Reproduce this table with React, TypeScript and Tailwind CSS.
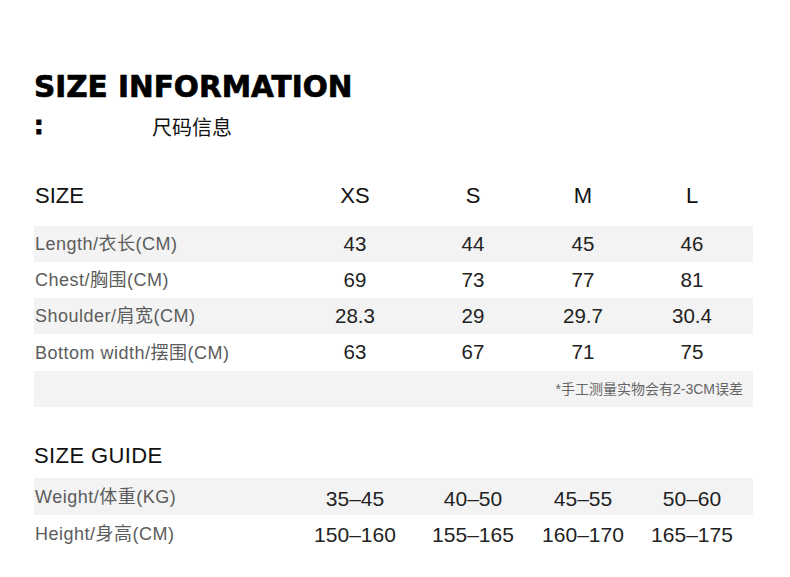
import React from "react";

const FONT = { fontFamily: '"Liberation Sans", "Noto Sans CJK SC", sans-serif' };

const widths = ["w-[118px]", "w-[118px]", "w-[102px]", "w-[116px]"];

function Row({
  label,
  values,
  shaded,
  h,
  valueClass,
}: {
  label: string;
  values: string[];
  shaded?: boolean;
  h: string;
  valueClass: string;
}) {
  return (
    <div className={`flex w-[719px] items-center ${h} ${shaded ? "bg-[#f3f3f3]" : ""}`}>
      <div className="w-[262px] pl-[1px] text-[18px] tracking-[0.5px] text-[#5c5c5c] leading-none">{label}</div>
      {values.map((v, i) => (
        <div key={i} className={`${widths[i]} text-center leading-none ${valueClass}`}>
          {v}
        </div>
      ))}
    </div>
  );
}

export default function App() {
  return (
    <div className="w-[790px] h-[577px] bg-white overflow-hidden" style={FONT}>
      <div className="pl-[34px] pt-[68px]">
        <div className="h-[40px] flex items-center">
          <div
            className="text-[29.5px] font-bold text-black leading-none [-webkit-text-stroke:0.7px_black]"
            style={{ fontFamily: '"DejaVu Sans", sans-serif' }}
          >
            SIZE INFORMATION
          </div>
        </div>
        <div className="h-[40px] flex items-center">
          <div
            className="w-[118px] text-[24px] font-bold leading-none text-black pb-[5px] [-webkit-text-stroke:0.8px_black]"
            style={{ fontFamily: '"DejaVu Sans", sans-serif' }}
          >
            :
          </div>
          <div className="text-[20px] leading-none text-[#111]">尺码信息</div>
        </div>

        <div className="mt-[28px] h-[40px] flex w-[719px] items-center">
          <div className="w-[262px] pl-[1px] text-[22px] leading-none text-[#111]">SIZE</div>
          {["XS", "S", "M", "L"].map((v, i) => (
            <div key={v} className={`${widths[i]} text-center text-[22px] leading-none text-[#111]`}>
              {v}
            </div>
          ))}
        </div>

        <div className="mt-[10px]">
          <Row label="Length/衣长(CM)" values={["43", "44", "45", "46"]} shaded h="h-[36px]" valueClass="text-[20.5px] text-[#222]" />
          <Row label="Chest/胸围(CM)" values={["69", "73", "77", "81"]} h="h-[36px]" valueClass="text-[20.5px] text-[#222]" />
          <Row label="Shoulder/肩宽(CM)" values={["28.3", "29", "29.7", "30.4"]} shaded h="h-[36px]" valueClass="text-[20.5px] text-[#222]" />
          <Row label="Bottom width/摆围(CM)" values={["63", "67", "71", "75"]} h="h-[37px]" valueClass="text-[20.5px] text-[#222]" />
          <div className="w-[719px] h-[36px] bg-[#f3f3f3] flex items-center justify-end pr-[10px]">
            <span className="text-[14px] leading-none text-[#666]">*手工测量实物会有2-3CM误差</span>
          </div>
        </div>

        <div className="mt-[29px] h-[40px] flex items-center">
          <div className="text-[22px] tracking-[0.4px] leading-none text-[#111]">SIZE GUIDE</div>
        </div>
        <div className="mt-[2px]">
          <Row label="Weight/体重(KG)" values={["35–45", "40–50", "45–55", "50–60"]} shaded h="h-[37px]" valueClass="text-[21px] text-[#222] pt-[3px]" />
          <Row label="Height/身高(CM)" values={["150–160", "155–165", "160–170", "165–175"]} h="h-[37px]" valueClass="text-[21px] text-[#222] pt-[2px]" />
        </div>
      </div>
    </div>
  );
}
